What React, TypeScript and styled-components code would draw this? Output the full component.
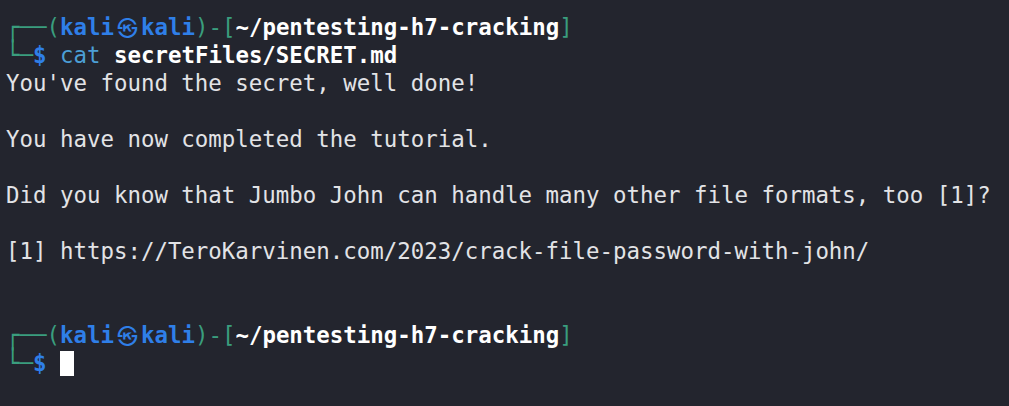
import React from "react";
import styled, { createGlobalStyle } from "styled-components";

const GlobalStyle = createGlobalStyle`
  html, body {
    margin: 0;
    padding: 0;
    background: #23252e;
  }
  body {
    width: 1009px;
    height: 406px;
    overflow: hidden;
  }
`;

const Terminal = styled.div`
  box-sizing: border-box;
  width: 1009px;
  height: 406px;
  padding: 13px 0 0 6px;
  background: #23252e;
  color: #e2e3e6;
  font-family: "DejaVu Sans Mono", "Liberation Mono", monospace;
  font-size: 22.42px;
  line-height: 28px;
  white-space: pre;
`;

const Line = styled.div`
  height: 28px;
`;

const Frame = styled.span`
  color: #3a9e7e;
`;

const Corner = styled.span`
  display: inline-block;
  color: #3a9e7e;
  transform: scaleY(1.18);
  transform-origin: 50% 50%;
`;

const User = styled.span`
  color: #2f7fe8;
  font-weight: bold;
`;

const Mark = styled.span`
  display: inline-block;
  width: 27px;
  height: 28px;
  text-align: center;
  color: #2f7fe8;
  font-family: "Noto Sans CJK KR", "DejaVu Sans", sans-serif;
  font-size: 20.5px;
  line-height: 28px;
  vertical-align: top;
`;

const Path = styled.span`
  color: #ffffff;
  font-weight: bold;
`;

const Dollar = styled.span`
  color: #2f7fe8;
  font-weight: bold;
`;

const Cmd = styled.span`
  color: #4c9fd6;
`;

const Arg = styled.span`
  color: #ffffff;
  font-weight: bold;
`;

const Cursor = styled.span`
  display: inline-block;
  width: 13.5px;
  height: 25px;
  background: #ffffff;
  vertical-align: -5px;
`;

const Prompt: React.FC<{ path: string }> = ({ path }) => (
  <Line>
    <Corner>┌</Corner>
    <Frame>──(</Frame>
    <User>kali</User>
    <Mark>㉿</Mark>
    <User>kali</User>
    <Frame>)-[</Frame>
    <Path>{path}</Path>
    <Frame>]</Frame>
  </Line>
);

const InputStart: React.FC = () => (
  <>
    <Corner>└</Corner>
    <Frame>─</Frame>
    <Dollar>$</Dollar>{" "}
  </>
);

const outputLines = [
  "You've found the secret, well done!",
  "",
  "You have now completed the tutorial.",
  "",
  "Did you know that Jumbo John can handle many other file formats, too [1]?",
  "",
  "[1] https://TeroKarvinen.com/2023/crack-file-password-with-john/",
  "",
  "",
];

export default function App() {
  return (
    <>
      <GlobalStyle />
      <Terminal>
        <Prompt path="~/pentesting-h7-cracking" />
        <Line>
          <InputStart />
          <Cmd>cat</Cmd> <Arg>secretFiles/SECRET.md</Arg>
        </Line>
        {outputLines.map((t, i) => (
          <Line key={i}>{t}</Line>
        ))}
        <Prompt path="~/pentesting-h7-cracking" />
        <Line>
          <InputStart />
          <Cursor />
        </Line>
      </Terminal>
    </>
  );
}
